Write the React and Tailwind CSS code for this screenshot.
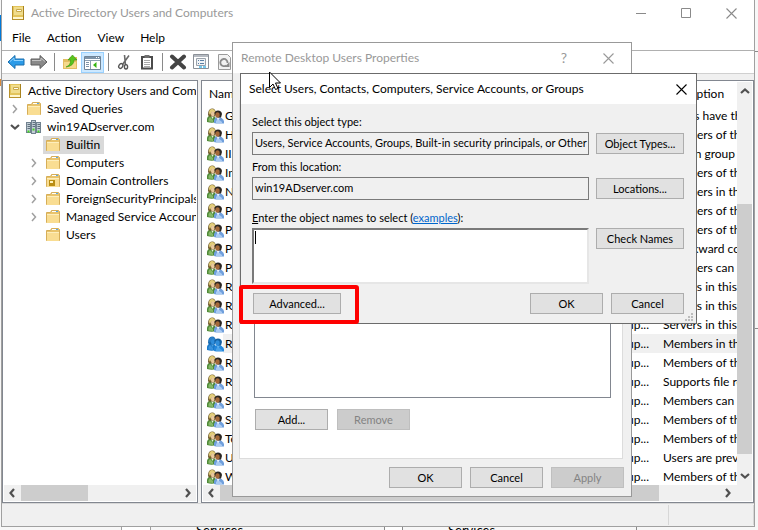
import React from "react";

const groups = [
  ["Guests", "Guests have the same access as members"],
  ["Hyper-V Administrators", "Members of this group have complete access"],
  ["IIS_IUSRS", "Built-in group used by Internet Information"],
  ["Incoming Forest Trust", "Members of this group can create"],
  ["Network Configuration", "Members in this group can have"],
  ["Performance Log Users", "Members of this group may schedule"],
  ["Performance Monitor", "Members of this group can access"],
  ["Pre-Windows 2000", "A backward compatibility group"],
  ["Print Operators", "Members can administer printers"],
  ["RDS Endpoint Servers", "Servers in this group run virtual"],
  ["RDS Management", "Servers in this group can perform"],
  ["RDS Remote Access", "Servers in this group enable users"],
  ["Remote Desktop Users", "Members in this group are granted"],
  ["Remote Management", "Members of this group can access"],
  ["Replicator", "Supports file replication in a domain"],
  ["Server Operators", "Members can administer domain"],
  ["Storage Replica", "Members of this group have complete"],
  ["Terminal Server", "Members of this group can update"],
  ["Users", "Users are prevented from making"],
  ["Windows Authorization", "Members of this group have access"],
];

function BookIcon() {
  return (
    <svg width="16" height="16" viewBox="0 0 16 16" className="shrink-0">
      <path d="M2 1h12v14H2z" fill="#b8922c" />
      <path d="M3 1h11v11H3z" fill="#e3c45a" />
      <path d="M4 2h9v8H4z" fill="#f0dc8c" />
      <path d="M3 12h10v2H3z" fill="#fff6cf" />
      <path d="M13 1h1v14h-1z" fill="#a8831f" />
      <path d="M6.500 4.500h5v2h-5z" fill="#fffef0" stroke="#c9a94a" />
    </svg>
  );
}

function FolderIcon({ ou }) {
  return (
    <svg width="16" height="16" viewBox="0 0 16 16" className="shrink-0">
      <path d="M1.500 3.500h4l1-2h7l1 1v11h-13z" fill="#e9c46c" stroke="#d6ae58" />
      <path d="M7 2h6v1H7z" fill="#fff" />
      <path d="M11 2h2v1h-2z" fill="#5aa9e6" />
      <path d="M2 5h12v9H2z" fill="#f9dd92" />
      <path d="M2 5h12v1H2z" fill="#fdeebd" />
      {ou && (
        <g>
          <path d="M4 7h6v6H4z" fill="#b98d14" />
          <path d="M5 8h3v2H5z" fill="#fff3bd" />
        </g>
      )}
    </svg>
  );
}

function DomainIcon() {
  return (
    <svg width="16" height="16" viewBox="0 0 16 16" className="shrink-0">
      {[
        [0.5, 3.5],
        [10.5, 3.5],
        [5.5, 1.5],
      ].map(([x, y]) => (
        <g key={x}>
          <rect x={x} y={y} width="4" height={x === 5.5 ? 13 : 10} fill="#c3ced6" stroke="#71828f" />
          <path d={`M${x + 1} ${y + 2}h2.500M${x + 1} ${y + 4}h2.500M${x + 1} ${y + 6}h2.500`} stroke="#5f707d" />
          <rect x={x + 1} y={y + 8} width="2" height="2" fill="#43d321" />
        </g>
      ))}
    </svg>
  );
}

function GroupIcon({ selected }) {
  return (
    <svg width="17" height="16" viewBox="0 0 17 16" className="block shrink-0">
      <path d="M0 14V10.500Q1 7.500 4 7.500T9 10V14Q5 15.500 0 14Z" fill={selected ? "#1979ca" : "#4f8a38"} />
      <path d="M1.500 13.500V11l1.500-2 3 3v2z" fill={selected ? "#3a93de" : "#86b868"} />
      <path d="M4 8l1.500 3L7 8z" fill={selected ? "#4a9fe0" : "#e6f2d8"} />
      <path d="M1 7Q1 .5 5 .5T9 6L8 8.500H2Z" fill={selected ? "#1668b0" : "#6f5a2a"} />
      <path d="M2 5Q2 1 5 1t3.500 3.500Q5 3.500 4 5L3 7Z" fill={selected ? "#2b80c8" : "#e2cd78"} />
      <ellipse cx="5.800" cy="5.800" rx="1.900" ry="2.500" fill={selected ? "#2f8ddb" : "#e8c79c"} />
      <path d="M7 15V12Q8 9 11.500 9T17 13V15.500H9Z" fill={selected ? "#2487dc" : "#6f9fdc"} />
      <path d="M9 15v-2l2-2 4 3v1z" fill={selected ? "#4aa2e8" : "#a9caf2"} />
      <path d="M9.500 9.500l1.500 3 2-3z" fill={selected ? "#5eb0ee" : "#eaf2fc"} />
      <path d="M7.500 6Q7.500 2.500 11 2.500T15 6l-1 3.500h-3z" fill={selected ? "#135f9f" : "#2a2622"} />
      <ellipse cx="10.500" cy="7" rx="2.200" ry="2.700" fill={selected ? "#2f8ddb" : "#a56a3a"} />
    </svg>
  );
}

function Chevron({ dir, className = "text-[#505050]", thin }) {
  const d = {
    left: "M8 2 4.500 6 8 10",
    right: "M4 2 7.500 6 4 10",
    up: "M2 8 6 4.500 10 8",
    down: "M2 4 6 7.500 10 4",
  }[dir];
  return (
    <svg width="12" height="12" viewBox="0 0 12 12" className={"block shrink-0 " + className}>
      <path d={d} fill="none" stroke="currentColor" strokeWidth={thin ? 1.5 : 2.2} />
    </svg>
  );
}

function Arrow({ flip, fill, stroke, light }) {
  return (
    <svg width="18" height="16" viewBox="0 0 18 16">
      <g transform={flip ? "matrix(-1 0 0 1 18 0)" : undefined}>
        <path d="M1 8 8 1.500V5h9v6H8v3.500z" fill={fill} stroke={stroke} />
        <path d="M3 7.500 7 4v2.500H16" fill="none" stroke={light} />
      </g>
    </svg>
  );
}

function Tool({ label, active, children }) {
  return (
    <button
      type="button"
      aria-label={label}
      className={
        "flex h-[21px] w-[23px] shrink-0 items-center justify-center " +
        (active ? "border border-[#99d1ff] bg-[#cce8ff]" : "")
      }
    >
      {children}
    </button>
  );
}

function Separator() {
  return (
    <span className="flex w-2 shrink-0 justify-center">
      <span className="h-[18px] w-px bg-[#8a8a8a]" />
    </span>
  );
}

function Toolbar() {
  return (
    <div className="flex h-[23px] shrink-0 items-center border-b border-[#d0d0d0] bg-white pl-[2px]">
      <Tool label="Back">
        <Arrow fill="#2c9be8" stroke="#1a6fae" light="#8fd3ff" />
      </Tool>
      <Tool label="Forward">
        <Arrow flip fill="#8a8a8a" stroke="#5c5c5c" light="#c4c4c4" />
      </Tool>
      <Separator />
      <Tool label="Up one level">
        <svg width="16" height="16" viewBox="0 0 16 16">
          <path d="M1 5h6l1-2h7v12H1z" fill="#e3bd62" />
          <path d="M2 8h12v6H2z" fill="#f5d98c" />
          <path d="M4 13Q9 11 8.500 6H6l4.500-5L15 6h-3Q12 12 4 13Z" fill="#57c41e" stroke="#3a9410" strokeWidth=".6" />
        </svg>
      </Tool>
      <Tool label="Show console tree" active>
        <svg width="17" height="15" viewBox="0 0 17 15">
          <path d="M.5 1.500h16v13H.5z" fill="#fff" stroke="#6f8498" />
          <path d="M1 2h15v2H1z" fill="#7d93a8" />
          <path d="M12 2.500h1M14 2.500h1" stroke="#fff" />
          <path d="M1 5.500h15M6.500 6v8" stroke="#8ca0b2" />
          <path d="M2 7.500h3M2 9.500h3M2 11.500h3" stroke="#7d93a8" />
          <path d="M12.500 7v6L9 10z" fill="#35b510" />
        </svg>
      </Tool>
      <Separator />
      <Tool label="Cut">
        <svg width="14" height="16" viewBox="0 0 14 16">
          <path d="M12 1.500 5.500 10.500M7.500 1 8.500 11" fill="none" stroke="#6a6a6a" strokeWidth="1.600" />
          <ellipse cx="3.800" cy="12" rx="1.800" ry="2.500" transform="rotate(35 3.800 12)" fill="none" stroke="#555" strokeWidth="1.400" />
          <ellipse cx="9" cy="12.800" rx="1.600" ry="2.200" fill="none" stroke="#555" strokeWidth="1.400" />
        </svg>
      </Tool>
      <Tool label="Copy">
        <svg width="14" height="16" viewBox="0 0 14 16">
          <path d="M2 3h10v11.500H2z" fill="#fff" stroke="#4b4b4b" strokeWidth="2" />
          <path d="M4.500 1h5v3h-5z" fill="#707070" />
          <path d="M4 6.500h6M4 8.500h6M4 10.500h6M4 12.500h6" stroke="#aaa" />
        </svg>
      </Tool>
      <Separator />
      <Tool label="Delete">
        <svg width="18" height="16" viewBox="0 0 18 16">
          <path d="M3 2.500 15 13.500M15 2.500 3 13.500" stroke="#444" strokeWidth="4" strokeLinecap="round" />
        </svg>
      </Tool>
      <Tool label="Properties">
        <svg width="16" height="16" viewBox="0 0 16 16">
          <path d="M.5.5h15v14H.5z" fill="#fff" stroke="#8b9097" />
          <path d="M1 1h14v2H1z" fill="#b5bac1" />
          <path d="M3.500 4.500h9v7h-9z" fill="#f0f3f6" stroke="#9aa2ab" />
          <path d="M5 6.500h1M7 6.500h4M5 9.500h1M7 9.500h4" stroke="#5a7fa5" />
          <path d="M6 13h3M10 13h3" stroke="#47b7e8" strokeWidth="1.500" />
        </svg>
      </Tool>
      <Tool label="Refresh">
        <svg width="14" height="16" viewBox="0 0 14 16">
          <path d="M1.500.5h9l3 3v12h-12z" fill="#f2f2f2" stroke="#9a9a9a" />
          <path d="M9 11.500A3.600 3.600 0 1 1 10.500 9" fill="none" stroke="#8a8a8a" strokeWidth="1.800" />
          <path d="M12.500 8v5h-5z" fill="#8a8a8a" />
        </svg>
      </Tool>
    </div>
  );
}

function TreeRow({ level, chevron, icon, label, selected }) {
  return (
    <li className={"flex h-[18px] items-center " + level}>
      <span className="mr-[3px] w-3 shrink-0">
        {chevron === "down" && <Chevron dir="down" />}
        {chevron === "right" && <Chevron dir="right" thin className="text-[#a0a0a0]" />}
      </span>
      <span className={"flex h-[18px] items-center pr-1 pl-[2px] " + (selected ? "bg-[#d9d9d9]" : "")}>
        {icon}
        <span className="ml-[5px] whitespace-nowrap">{label}</span>
      </span>
    </li>
  );
}

function TreePane() {
  return (
    <nav aria-label="Console tree" className="flex w-[196px] shrink-0 flex-col border border-[#828790] bg-white p-px">
      <div className="min-h-0 flex-1 overflow-hidden">
        <div className="flex h-[18px] items-center pl-[3px]">
          <BookIcon />
          <span className="ml-[5px] whitespace-nowrap">Active Directory Users and Com</span>
        </div>
        <ul>
          <TreeRow level="pl-[5px]" chevron="right" icon={<FolderIcon />} label="Saved Queries" />
          <TreeRow level="pl-[5px]" chevron="down" icon={<DomainIcon />} label="win19ADserver.com" />
          <TreeRow level="pl-6" icon={<FolderIcon />} label="Builtin" selected />
          <TreeRow level="pl-6" chevron="right" icon={<FolderIcon />} label="Computers" />
          <TreeRow level="pl-6" chevron="right" icon={<FolderIcon ou />} label="Domain Controllers" />
          <TreeRow level="pl-6" chevron="right" icon={<FolderIcon />} label="ForeignSecurityPrincipals" />
          <TreeRow level="pl-6" chevron="right" icon={<FolderIcon />} label="Managed Service Accounts" />
          <TreeRow level="pl-6" icon={<FolderIcon />} label="Users" />
        </ul>
      </div>
      <div className="flex h-4 shrink-0 items-center bg-[#f0f0f0] px-[2px]">
        <Chevron dir="left" />
        <span className="ml-[3px] h-full w-[67px] bg-[#cdcdcd]" />
        <Chevron dir="right" className="ml-auto text-[#505050]" />
      </div>
    </nav>
  );
}

function ListPane() {
  return (
    <section className="flex min-w-0 flex-1 flex-col border border-[#828790] bg-white p-px">
      <div className="flex min-h-0 flex-1">
        <div className="min-w-0 flex-1 overflow-hidden">
          <table className="w-full table-fixed border-collapse text-left whitespace-nowrap">
            <colgroup>
              <col className="w-5" />
              <col className="w-[332px]" />
              <col className="w-[104px]" />
              <col />
            </colgroup>
            <thead>
              <tr className="h-6">
                <th colSpan="2" className="p-0 pl-[6px] font-normal">Name</th>
                <th className="p-0 font-normal">Type</th>
                <th className="p-0 pl-1 font-normal">Description</th>
              </tr>
            </thead>
            <tbody>
              {groups.map(([name, description], i) => (
                <tr key={name} className="h-[19px]">
                  <td className="p-0 pl-[4px]">
                    <GroupIcon selected={i === 12} />
                  </td>
                  <td className={"overflow-hidden p-0 pl-[2px] " + (i === 12 ? "bg-[#f0f0f0]" : "")}>{name}</td>
                  <td className={"overflow-hidden p-0 pr-[10px] text-right " + (i === 12 ? "bg-[#f0f0f0]" : "")}>
                    Security Group...
                  </td>
                  <td className={"overflow-hidden p-0 pl-1 " + (i === 12 ? "bg-[#f0f0f0]" : "")}>{description}</td>
                </tr>
              ))}
            </tbody>
          </table>
        </div>
        <div className="flex w-[15px] shrink-0 flex-col items-center bg-[#f0f0f0] py-[3px]">
          <Chevron dir="up" />
          <span className="mt-auto mb-4 h-[250px] w-full bg-[#cdcdcd]" />
          <Chevron dir="down" />
        </div>
      </div>
      <div className="flex h-4 shrink-0 items-center bg-[#f0f0f0] pr-[18px] pl-[2px]">
        <Chevron dir="left" />
        <span className="ml-[3px] h-full w-[439px] bg-[#cdcdcd]" />
        <Chevron dir="right" className="ml-auto text-[#505050]" />
      </div>
    </section>
  );
}

function MainWindow() {
  return (
    <main className="absolute top-0 right-[3px] bottom-[3px] left-px flex flex-col border border-t-0 border-[#a0a0a0] bg-[#f0f0f0]">
      <header className="flex h-[26px] shrink-0 items-center bg-white pr-[17px] pl-2">
        <BookIcon />
        <h1 className="ml-[5px] text-[#999999]">Active Directory Users and Computers</h1>
        <div className="ml-auto flex items-center gap-[35px] text-[#8a8a8a]">
          <button type="button" aria-label="Minimize">
            <svg width="10" height="11" viewBox="0 0 10 11" className="block">
              <path d="M0 5.500h10" stroke="currentColor" />
            </svg>
          </button>
          <button type="button" aria-label="Maximize">
            <svg width="10" height="11" viewBox="0 0 10 11" className="block">
              <path d="M.5.5h9v9h-9z" fill="none" stroke="currentColor" />
            </svg>
          </button>
          <CloseButton />
        </div>
      </header>
      <div role="menubar" className="flex h-[25px] shrink-0 items-center gap-4 border-b border-[#b0b0b0] bg-white pl-[10px]">
        <button type="button" role="menuitem">File</button>
        <button type="button" role="menuitem">Action</button>
        <button type="button" role="menuitem">View</button>
        <button type="button" role="menuitem">Help</button>
      </div>
      <Toolbar />
      <div className="flex min-h-0 flex-1 gap-[3px] pt-[6px]">
        <TreePane />
        <ListPane />
      </div>
      <footer className="flex h-[23px] shrink-0 justify-end border-t border-[#d7d7d7] py-px">
        <span className="w-[86px] border-x border-[#d7d7d7]" />
      </footer>
    </main>
  );
}

function CloseButton() {
  return (
    <button type="button" aria-label="Close">
      <svg width="11" height="11" viewBox="0 0 11 11" className="block">
        <path d="M.5.5 10.500 10.500M10.500.5.5 10.500" stroke="currentColor" strokeWidth="1.100" />
      </svg>
    </button>
  );
}

function DialogButton({ wide, disabled, children }) {
  return (
    <button
      type="button"
      disabled={disabled}
      className={
        "h-[21px] shrink-0 border text-center " +
        (wide ? "w-[88px] " : "w-[73px] ") +
        (disabled ? "border-[#bfbfbf] bg-[#cccccc] text-[#838383]" : "border-[#adadad] bg-[#e1e1e1] text-black")
      }
    >
      {children}
    </button>
  );
}

const dialogFont = "font-[Lato,'Noto_Sans',sans-serif] text-[11px] leading-4 ";
const windowFont = "font-[Lato,'Noto_Sans',sans-serif] text-[12px] leading-4 ";

function PropertiesDialog() {
  return (
    <section
      role="dialog"
      aria-labelledby="props-title"
      className={"absolute top-[42px] left-[232px] flex h-[455px] w-[400px] flex-col border border-[#999999] bg-[#f0f0f0] " + dialogFont}
    >
      <header className={"flex h-[30px] shrink-0 items-center bg-white pr-[17px] pl-2 text-[#999999] " + windowFont}>
        <h2 id="props-title">Remote Desktop Users Properties</h2>
        <button type="button" aria-label="Help" className="mr-[36px] ml-auto text-[14px]">?</button>
        <CloseButton />
      </header>
      <div className="flex min-h-0 flex-1 flex-col px-[6px] pt-[27px] pb-2">
        <div className="mr-[2px] flex min-h-0 flex-1 flex-col border border-[#dcdcdc] bg-white pt-4 pr-[11px] pb-7 pl-[14px]">
          <div className="min-h-0 flex-1 border border-[#828790] bg-white" />
          <div className="mt-[11px] flex gap-[9px] pl-px">
            <DialogButton>Add...</DialogButton>
            <DialogButton disabled>Remove</DialogButton>
          </div>
        </div>
        <div className="mt-2 flex justify-end gap-2 pr-px">
          <DialogButton>OK</DialogButton>
          <DialogButton>Cancel</DialogButton>
          <DialogButton disabled>Apply</DialogButton>
        </div>
      </div>
    </section>
  );
}

function ReadOnlyField({ id, value }) {
  return (
    <input
      id={id}
      readOnly
      defaultValue={value}
      className="h-[23px] min-w-0 flex-1 rounded-none border border-[#7a7a7a] bg-[#f0f0f0] pr-0 pb-[2px] pl-[2px] outline-none"
    />
  );
}

function SelectDialog() {
  return (
    <section
      role="dialog"
      aria-labelledby="select-title"
      className={"absolute top-[73px] left-[240px] flex h-[251px] w-[457px] flex-col border border-[#6b6b6b] bg-[#f0f0f0] " + dialogFont}
    >
      <header className={"flex h-[30px] shrink-0 items-center bg-white pr-[9px] pl-2 " + windowFont}>
        <h2 id="select-title">Select Users, Contacts, Computers, Service Accounts, or Groups</h2>
        <span className="ml-auto flex">
          <CloseButton />
        </span>
      </header>
      <form className="flex flex-1 flex-col pt-[10px] pr-3 pl-[11px]">
        <label htmlFor="object-type" className="mb-[2px]">Select this object type:</label>
        <div className="flex items-center gap-[7px]">
          <ReadOnlyField id="object-type" value="Users, Service Accounts, Groups, Built-in security principals, or Other objects" />
          <DialogButton wide>Object Types...</DialogButton>
        </div>
        <label htmlFor="location" className="mt-1 mb-[2px]">From this location:</label>
        <div className="flex items-center gap-[7px]">
          <ReadOnlyField id="location" value="win19ADserver.com" />
          <DialogButton wide>Locations...</DialogButton>
        </div>
        <div className="mt-[10px] mb-[2px]">
          <label htmlFor="object-names">
            <u>E</u>nter the object names to select (
          </label>
          <a href="#examples" className="text-[#0066cc] underline">examples</a>):
        </div>
        <div className="flex items-start gap-[7px]">
          <div className="flex h-14 min-w-0 flex-1 border-2 border-t-[#7a7a7a] border-r-[#e6e6e6] border-b-[#e6e6e6] border-l-[#7a7a7a] bg-white pt-px pl-px">
            <span aria-hidden="true" className="h-[13px] w-px shrink-0 bg-black" />
            <textarea id="object-names" className="min-w-0 flex-1 resize-none outline-none" />
          </div>
          <DialogButton wide>Check Names</DialogButton>
        </div>
        <div className="mt-[9px] flex gap-2 pl-px">
          <DialogButton wide>Advanced...</DialogButton>
          <span className="flex-1" />
          <DialogButton>OK</DialogButton>
          <DialogButton>Cancel</DialogButton>
        </div>
      </form>
      <svg width="9" height="9" viewBox="0 0 9 9" className="absolute right-[2px] bottom-[1px] text-[#bcbcbc]">
        <path d="M6 0h2v2H6zM3 3h2v2H3zM6 3h2v2H6zM0 6h2v2H0zM3 6h2v2H3zM6 6h2v2H6z" fill="currentColor" />
      </svg>
    </section>
  );
}

export default function App() {
  return (
    <div className={"relative h-screen min-h-[530px] overflow-hidden bg-[#f7f7f7] text-black " + windowFont}>
      <div className="absolute top-[15px] left-0 h-[26px] w-px bg-[#0078d7]" />
      <div className="absolute top-[79px] left-0 h-[7px] w-px bg-[#d98a3a]" />
      <div className="absolute top-[51px] right-0 h-px w-[3px] bg-[#8a8a8a]" />
      <div className="absolute top-[328px] right-0 h-px w-[3px] bg-[#8a8a8a]" />
      <div className="absolute bottom-0 left-[121px] h-[3px] w-[30px] border-x border-[#a0a0a0] bg-white" />
      <div className="absolute bottom-0 left-[384px] h-[3px] w-[19px] border-x border-[#8a8a8a] bg-white" />
      <div className="absolute bottom-0 left-[636px] h-[3px] w-px bg-[#8a8a8a]" />
      <span className="absolute bottom-[-8px] left-[196px] text-[13px]">Services</span>
      <span className="absolute bottom-[-8px] left-[448px] text-[13px]">Services</span>
      <MainWindow />
      <PropertiesDialog />
      <SelectDialog />
      <div className="pointer-events-none absolute top-[285px] left-[239px] h-[39px] w-[120px] rounded-[3px] border-4 border-[#fe0000]" />
      <svg width="13" height="20" viewBox="0 0 13 20" className="pointer-events-none absolute top-[71px] left-[269px]">
        <path d="M.5 1v15.500l3.500-3.500 2.500 5.500 2.500-1-2.500-5.500h5z" fill="#fff" stroke="#000" />
      </svg>
    </div>
  );
}
